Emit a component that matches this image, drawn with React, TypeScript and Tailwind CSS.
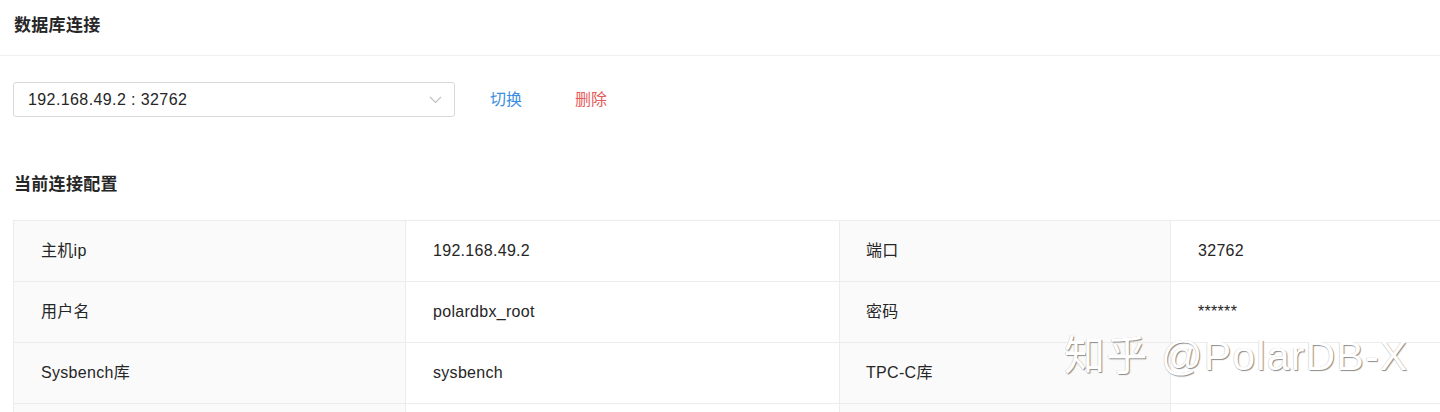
const font = "font-['Liberation_Sans','Noto_Sans_CJK_SC',sans-serif]"

const rows = [
  ["主机ip", "192.168.49.2", "端口", "32762"],
  ["用户名", "polardbx_root", "密码", "******"],
  ["Sysbench库", "sysbench", "TPC-C库", ""],
  ["", "", "", ""],
]

export default function App() {
  return (
    <div className={`relative h-[412px] w-[1440px] overflow-hidden bg-white text-[#262626] ${font}`}>
      {/* header */}
      <div className="flex h-[56px] items-center border-b border-[#f0f0f0] px-[14px] pb-[4px]">
        <h1 className="text-[17px] font-semibold tracking-[0.3px]">数据库连接</h1>
      </div>

      {/* connection picker */}
      <div className="mt-[26px] flex items-center pl-[13px]">
        <div className="flex h-[35px] w-[442px] items-center justify-between rounded-[3px] border border-[#d9d9d9] pl-[14px] pr-[12px]">
          <span className="text-[16px] tracking-[0.4px]">192.168.49.2 : 32762</span>
          <svg width="13" height="8" viewBox="0 0 13 8" fill="none" stroke="#bfbfbf" strokeWidth="1.1">
            <path d="M1 1l5.5 5.5L12 1" />
          </svg>
        </div>
        <button className="ml-[35px] text-[16px] text-[#3b8ee0]">切换</button>
        <button className="ml-[53px] text-[16px] text-[#e55a5a]">删除</button>
      </div>

      {/* current config */}
      <h2 className="mt-[56px] px-[14px] text-[17px] font-semibold leading-[24px] tracking-[0.3px]">当前连接配置</h2>

      <div className="ml-[13px] mt-[23px] border-l border-t border-[#ececec]">
        {rows.map((r, i) => (
          <div key={i} className="grid h-[61px] grid-cols-[391px_434px_331px_1fr] border-b border-[#ececec] text-[16px] tracking-[0.3px]">
            <div className="flex items-center bg-[#fafafa] pl-[27px]">{r[0]}</div>
            <div className="flex items-center border-l border-[#ececec] pl-[27px]">{r[1]}</div>
            <div className="flex items-center border-l border-[#ececec] bg-[#fafafa] pl-[26px]">{r[2]}</div>
            <div className="flex items-center border-l border-[#ececec] pl-[27px]">{r[3]}</div>
          </div>
        ))}
      </div>

      {/* watermark */}
      <div className="pointer-events-none absolute left-[1064px] top-[331px] text-[41px] leading-[50px] tracking-[1.2px] text-white [text-shadow:1px_1px_1px_#8a8a8a,-0.5px_-0.5px_0_#d0d0d0]">
        知乎 @PolarDB-X
      </div>
    </div>
  )
}
